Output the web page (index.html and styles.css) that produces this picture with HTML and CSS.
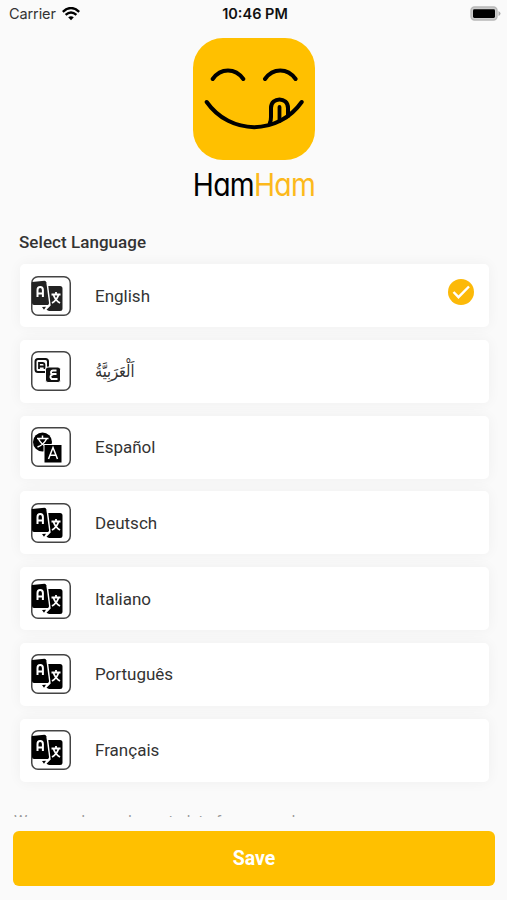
FILE: index.html
```html
<!DOCTYPE html>
<html lang="en">
<head>
<meta charset="utf-8">
<title>HamHam</title>
<link rel="stylesheet" href="styles.css">
</head>
<body>
<svg class="defs" width="0" height="0" aria-hidden="true">
  <symbol id="cards" viewBox="0 0 40 40">
    <path d="M1 6 13.500 4.800q1.500 0 1.800 1.500L18 27q.1 1.800-1.200 1.900H3q-2 0-2-2Z" fill="currentColor"/>
    <path d="M17.300 10h11.700q2.500 0 2.500 2.500v20q0 2.500-2.500 2.500H18l-2.500-1.200 4.200-4.300Z" fill="currentColor"/>
    <path d="m11 31 4-.3-2 3Z" fill="currentColor"/>
    <path d="M6.500 21v-7q0-3 2.700-3t2.700 3v7M7 17.500h5" fill="none" stroke="#fff" stroke-width="2"/>
    <path d="M20.500 18.500h9M25 16v2.500M22.500 19q2 5.500 6.500 8M27.500 19q-2 5.500-6.500 8" fill="none" stroke="#fff" stroke-width="1.800"/>
  </symbol>
</svg>
<header class="status">
  <div class="carrier">Carrier
    <svg width="18" height="14" viewBox="0 0 18 14"><path d="M.8 4.800Q9-2.800 17.200 4.800M3.600 7.900q5.400-4.900 10.800 0" fill="none" stroke="#000" stroke-width="2.300"/><path d="M6.200 10.300q2.800-2.300 5.600 0L9 13.200Z"/></svg>
  </div>
  <div class="time">10:46 PM</div>
  <svg class="battery" width="31" height="16" viewBox="0 0 31 16"><rect x="1" y="1" width="26" height="13" rx="3.500" fill="#ccc" stroke="#b8b8b8" stroke-width="1.400"/><rect x="3" y="3.200" width="22" height="8.700" rx="1.300"/><path d="M28.500 5v5q2-1 2-2.500t-2-2.500" fill="#aaa"/></svg>
</header>
<div class="brand">
  <svg width="122" height="122" viewBox="0 0 122 122"><rect width="122" height="122" rx="30" fill="#ffc000"/><g fill="none" stroke="#000" stroke-width="4" stroke-linecap="round" stroke-linejoin="round"><path d="M19.700 41c8-11.300 22.500-11.300 30.600 0M72 41c8-11.300 22.500-11.300 30.600 0M13.700 64c23.500 33.500 71.500 33.500 95 0"/><path d="M76.800 85q1.200-2 1.200-6v-9c0-11.500 17-11.500 17 0v8"/><path d="M86.500 69v14" stroke-width="3.800"/></g></svg>
  <div class="wordmark">Ham<span>Ham</span></div>
</div>
<main>
  <h1>Select Language</h1>
  <div class="list">
    <div class="row first"><svg class="icon"><use href="#cards"/></svg><span>English</span><svg class="check" width="26" height="26" viewBox="0 0 26 26"><circle cx="13" cy="13" r="13" fill="#fcb908"/><path d="m5.500 13 5 5.200L21 7.500" fill="none" stroke="#fff" stroke-width="2.400"/></svg></div>
    <div class="row"><svg class="icon" viewBox="0 0 40 40"><rect x="4.500" y="8" width="12.500" height="13" rx="2.500" fill="#fff" stroke="#111" stroke-width="2"/><path d="M8 18v-6h3.500q2 0 2 2v4M8 15.500h5.500" fill="none" stroke="#111" stroke-width="1.800"/><rect x="14.500" y="16" width="15" height="15.500" rx="2.500" fill="#111" stroke="#fff"/><path d="M25.500 19.500h-3.500q-3 .5-1.500 3.500h5M22.500 23q-5 1.500-2 5h6" fill="none" stroke="#fff" stroke-width="1.900"/></svg><span class="arabic" lang="ar" dir="rtl">اَلْعَرَبِيَّةُ</span></div>
    <div class="row"><svg class="icon" viewBox="0 0 40 40"><circle cx="11.500" cy="15" r="9.500"/><path d="M6 11.500h11.500M11.500 8.500v3M7.500 12q3 6 9 8M15.500 12q-3 6-9 8" fill="none" stroke="#fff" stroke-width="1.500"/><path d="M13 17.500h18V36H13Z" stroke="#fff"/><path d="m17.500 32 4.500-11.500L26.500 32M19 28.200h6" fill="none" stroke="#fff" stroke-width="1.500"/></svg><span>Español</span></div>
    <div class="row"><svg class="icon"><use href="#cards"/></svg><span>Deutsch</span></div>
    <div class="row"><svg class="icon"><use href="#cards"/></svg><span>Italiano</span></div>
    <div class="row"><svg class="icon"><use href="#cards"/></svg><span>Português</span></div>
    <div class="row"><svg class="icon"><use href="#cards"/></svg><span>Français</span></div>
  </div>
  <p class="note">We moved your dessert plate for your order</p>
</main>
<button class="save">Save</button>
</body>
</html>
```

FILE: styles.css
```css
* { box-sizing: border-box; }
body { margin: 0; height: 900px; overflow: hidden; background: #fafafa; color: #333; font-family: Roboto, "Noto Sans", sans-serif; }
.defs { display: block; position: absolute; }
.status { height: 27px; display: grid; grid-template-columns: 1fr auto 1fr; align-items: center; padding: 0 6px 0 9px; font: 14.5px Inter, sans-serif; color: #333; }
.carrier { display: flex; align-items: center; gap: 6px; letter-spacing: -.1px; }
.time { font-weight: 600; font-size: 14.5px; color: #111; }
.battery { justify-self: end; }
.brand { display: flex; flex-direction: column; align-items: center; padding-top: 10.500px; height: 205px; }
.brand svg { flex: none; display: block; }
.wordmark { margin-top: 7px; font: 400 31.500px/36px Inter, sans-serif; font-feature-settings: "cv11"; color: #000; letter-spacing: -.8px; white-space: nowrap; transform: scaleX(.9); }
.wordmark span { color: #fcb91c; }
h1 { margin: 0 0 12px 19px; font-size: 17px; line-height: 20px; font-weight: 500; letter-spacing: .05px; }
.list { display: flex; flex-direction: column; gap: 12.800px; margin: 0 18px 0 20px; }
.row { height: 63px; border-radius: 5px; background: #fff; box-shadow: 0 0 14px #0000000c; display: flex; align-items: center; padding: 0 15px 0 11px; font-size: 17px; }
.icon { width: 40px; height: 40px; box-shadow: inset 0 0 0 1.500px #444; border-radius: 7px; margin-right: 24px; flex: none; color: #000; }
.first .icon { color: #222; }
.check { margin: -8px 0 0 auto; }
.arabic { font-family: "DejaVu Sans", sans-serif; font-size: 17px; transform: scaleX(.85); transform-origin: left; }
.note { margin: 29.200px 14px 0; height: 6px; overflow: hidden; font-size: 15px; line-height: 21px; word-spacing: 1px; color: #999; white-space: nowrap; }
.save { display: block; width: 482px; height: 55px; margin: 14px 0 0 13px; border: 0; border-radius: 6px; background: #ffc000; color: #fff; font: 700 19.500px Roboto, sans-serif; }
```
